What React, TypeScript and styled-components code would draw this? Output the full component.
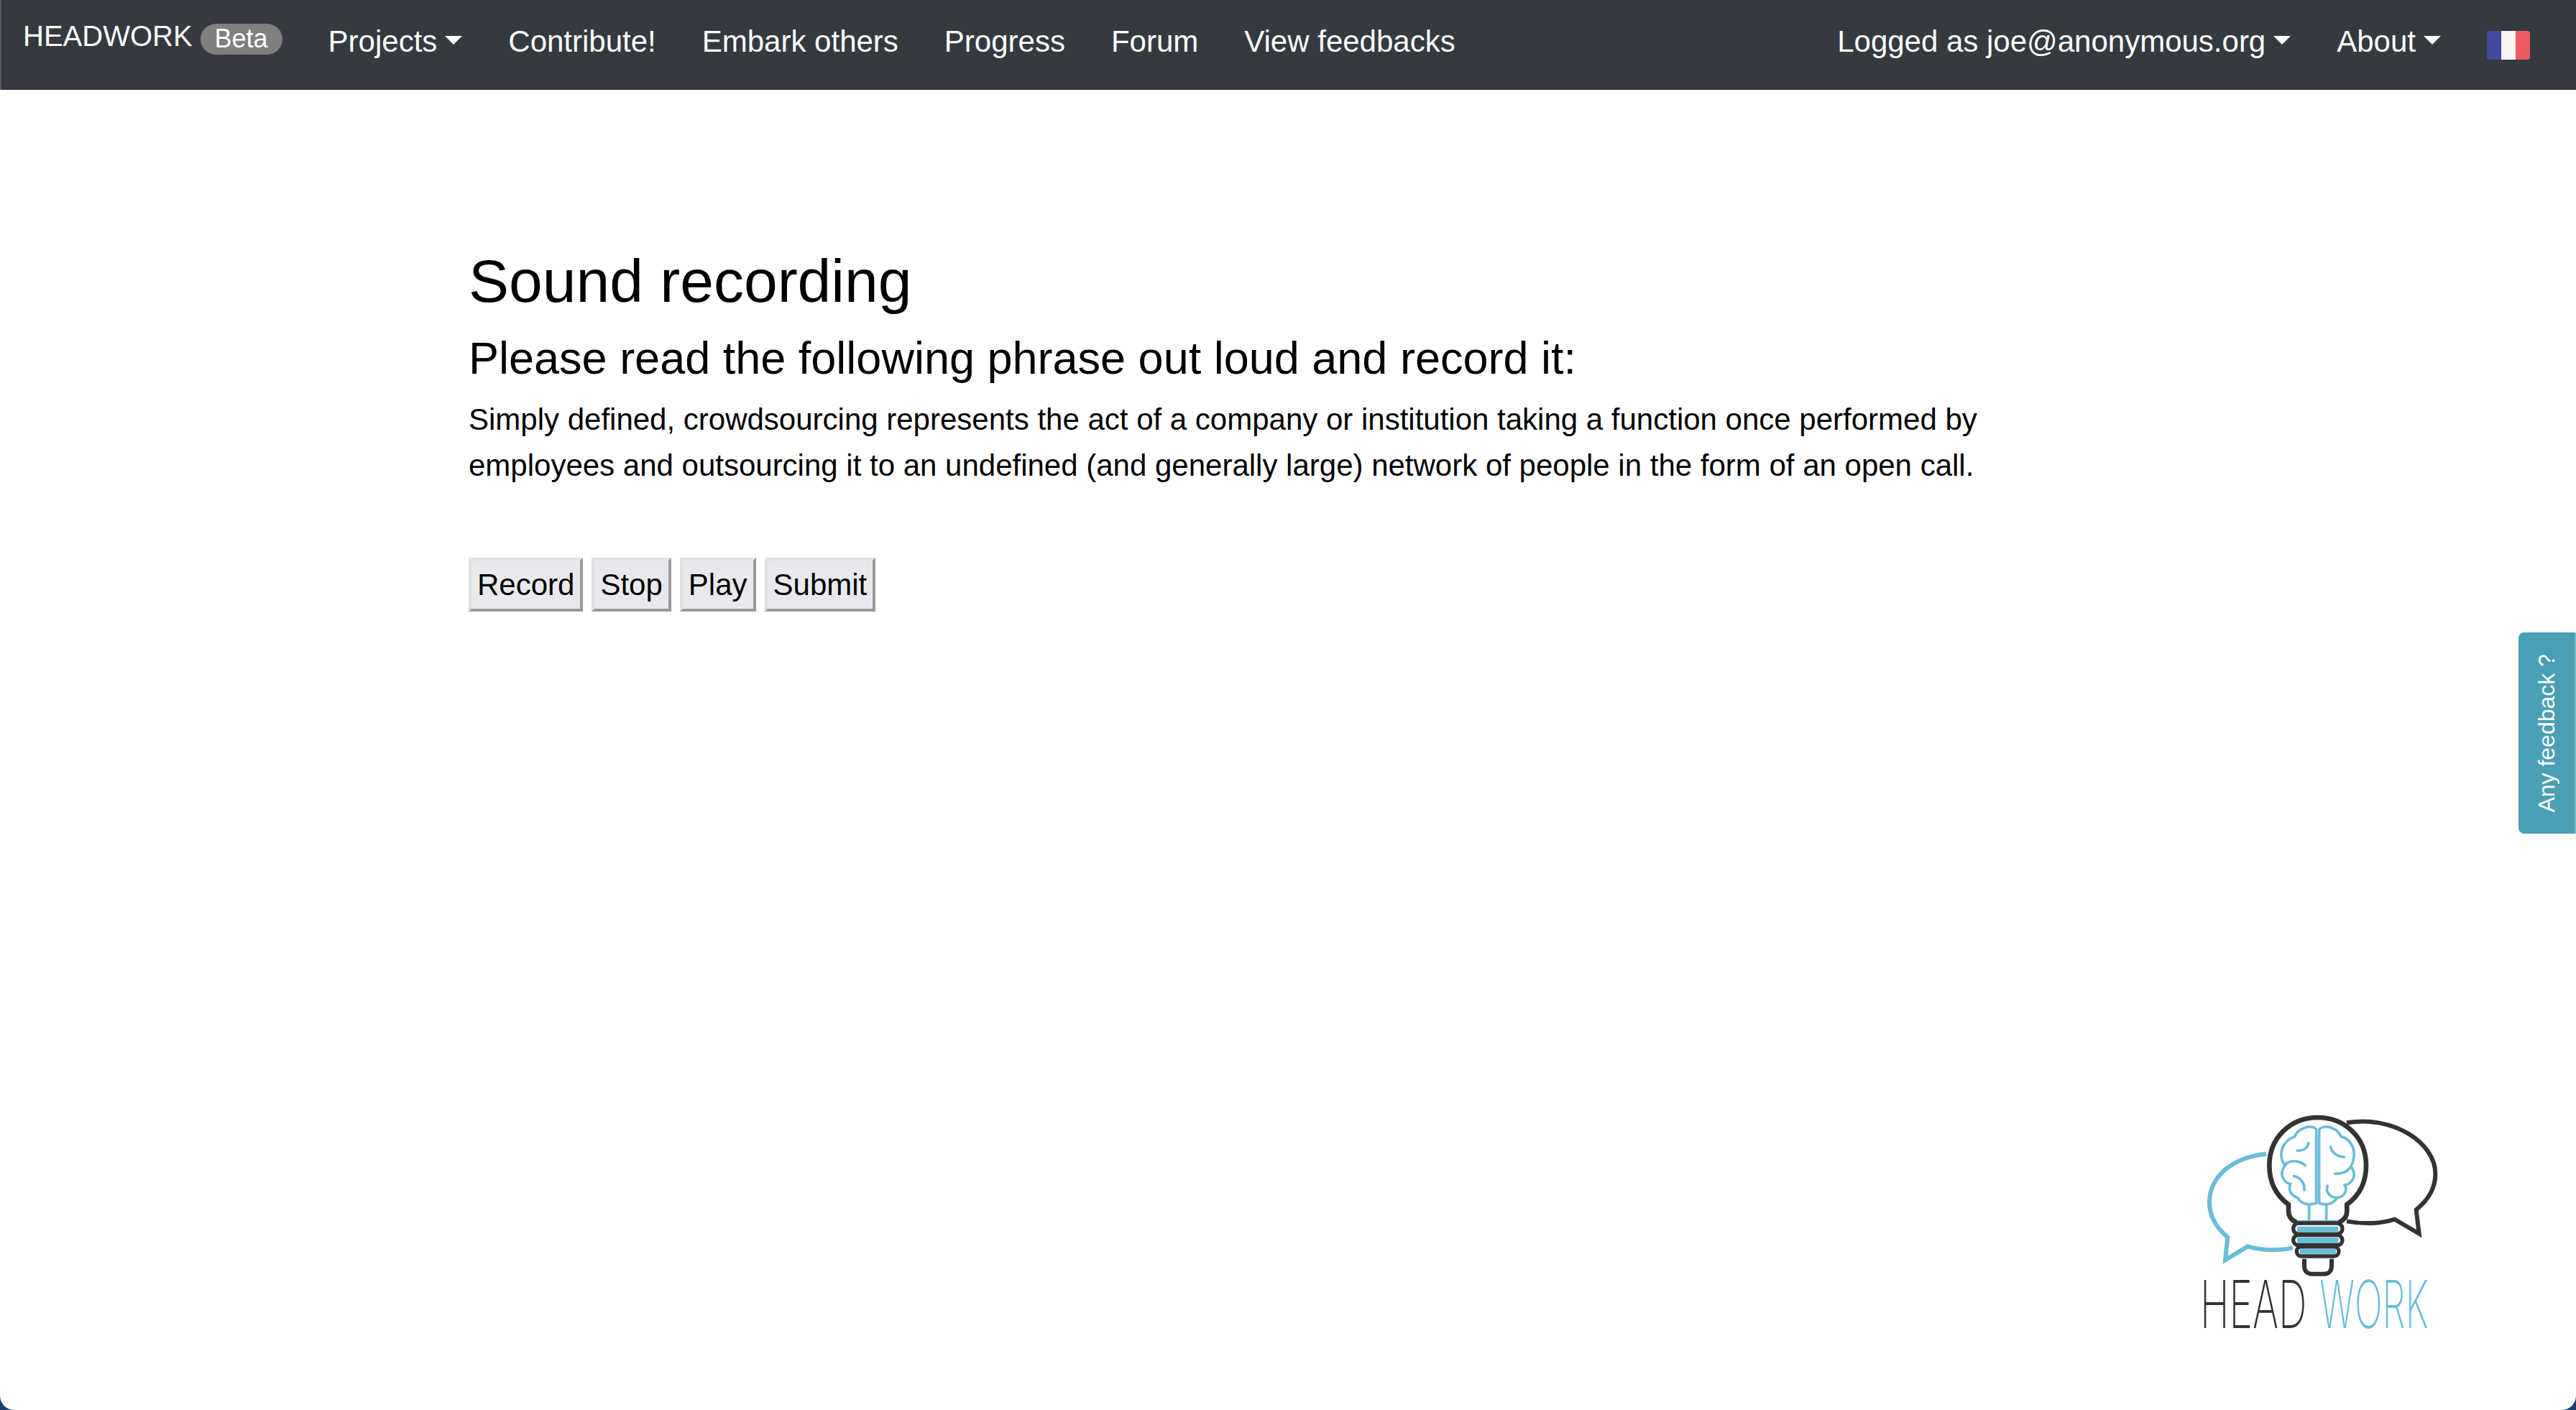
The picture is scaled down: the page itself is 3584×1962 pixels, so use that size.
import React from "react";
import styled, { createGlobalStyle } from "styled-components";

const GlobalStyle = createGlobalStyle`
  html, body {
    margin: 0;
    padding: 0;
    height: 100%;
    background: #1b3f6b;
  }
  #root {
    height: 100%;
  }
  * {
    box-sizing: border-box;
  }
`;

const leftLinks = ["Contribute!", "Embark others", "Progress", "Forum", "View feedbacks"];
const actions = ["Record", "Stop", "Play", "Submit"];

const Logo = () => (
  <LogoSvg viewBox="0 0 1200 1080" role="img" aria-label="Headwork">
    <g fill="none" strokeLinecap="round" strokeLinejoin="miter">
      <path
        d="M400 257C260 270 162 350 162 460C162 520 190 565 238 605L228 700L322 643C380 660 445 662 510 650"
        stroke="#6abdd8"
        strokeWidth="18"
        strokeLinecap="butt"
      />
      <path
        d="M735 127C930 95 1105 210 1105 340C1105 400 1075 450 1025 490L1037 590L935 530C870 550 800 550 735 538"
        stroke="#333"
        strokeWidth="18"
        strokeLinecap="butt"
      />
      <g stroke="#6abdd8" strokeWidth="11">
        <path d="M608 155C600 142 570 140 555 150C540 155 525 165 518 185C495 190 465 215 462 255C460 275 470 300 478 305C465 320 460 345 470 360C478 375 490 380 500 383C490 405 500 430 530 440C545 465 575 475 608 462Z" />
        <path d="M620 155C630 142 660 140 675 150C690 155 705 170 712 185C740 190 768 225 765 260C765 280 760 295 752 310C770 330 770 360 750 375C745 382 735 385 727 387C740 410 725 435 695 440C680 465 650 475 620 462Z" />
        <path d="M528 243C550 245 572 235 575 212" />
        <path d="M478 300C505 280 540 285 562 305" />
        <path d="M515 350C540 355 560 375 558 408" />
        <path d="M668 227C670 250 695 268 725 270" />
        <path d="M686 340C715 340 740 330 752 310" />
        <path d="M655 390C645 415 665 440 695 440" />
        <path d="M578 470V535M650 470V535" strokeLinecap="butt" />
      </g>
      <path
        d="M520 540C500 530 492 515 492 495V468C440 430 412 375 412 305C412 190 500 105 614 105C728 105 816 190 816 305C816 375 788 430 736 468V495C736 515 728 530 708 540"
        stroke="#333"
        strokeWidth="20"
      />
      <g fill="#6abdd8" stroke="none">
        <rect x="528" y="533" width="172" height="10" />
        <rect x="528" y="560" width="172" height="24" rx="4" />
        <rect x="528" y="606" width="172" height="24" rx="4" />
        <rect x="540" y="652" width="150" height="22" rx="4" />
      </g>
      <g stroke="#333" strokeWidth="16">
        <rect x="512" y="546" width="205" height="46" rx="23" />
        <rect x="512" y="596" width="205" height="42" rx="21" />
        <rect x="526" y="644" width="176" height="40" rx="20" />
      </g>
      <path d="M558 695V725C558 750 575 758 590 758H640C660 758 672 745 672 725V695" stroke="#333" strokeWidth="18" strokeLinecap="butt" />
    </g>
    <WordMark transform="translate(123 985) scale(0.6 1)" fill="#333">
      HEAD
    </WordMark>
    <WordMark transform="translate(622 985) scale(0.56 1)" fill="#6abdd8">
      WORK
    </WordMark>
  </LogoSvg>
);

const Flag = () => (
  <FlagSvg viewBox="0 0 60 40">
    <defs>
      <clipPath id="flag-clip">
        <rect width="60" height="40" rx="4" />
      </clipPath>
    </defs>
    <g clipPath="url(#flag-clip)">
      <rect width="20" height="40" fill="#434a9b" />
      <rect x="20" width="20" height="40" fill="#f4f4f4" />
      <rect x="40" width="20" height="40" fill="#ec5a60" />
    </g>
  </FlagSvg>
);

export default function App() {
  return (
    <>
      <GlobalStyle />
      <Page>
        <Navbar>
          <Brand>
            HEADWORK
            <Badge>Beta</Badge>
          </Brand>
          <NavLink $caret>Projects</NavLink>
          {leftLinks.map((link) => (
            <NavLink key={link}>{link}</NavLink>
          ))}
          <NavRight>
            <NavLink $caret>Logged as joe@anonymous.org</NavLink>
            <NavLink $caret>About</NavLink>
            <FlagSlot>
              <Flag />
            </FlagSlot>
          </NavRight>
        </Navbar>
        <Main>
          <Title>Sound recording</Title>
          <Subtitle>Please read the following phrase out loud and record it:</Subtitle>
          <Phrase>
            Simply defined, crowdsourcing represents the act of a company or institution taking a function once performed by
            employees and outsourcing it to an undefined (and generally large) network of people in the form of an open call.
          </Phrase>
          <Actions>
            {actions.map((action) => (
              <ActionButton key={action} type="button">
                {action}
              </ActionButton>
            ))}
          </Actions>
        </Main>
        <Footer>
          <Logo />
        </Footer>
        <FeedbackTab>
          <FeedbackText>Any feedback ?</FeedbackText>
        </FeedbackTab>
      </Page>
    </>
  );
}

const Page = styled.div`
  position: relative;
  height: 1962px;
  display: flex;
  flex-direction: column;
  background: #fff;
  border-radius: 0 0 20px 20px;
  overflow: hidden;
  font-family: "Liberation Sans", Arial, sans-serif;
  color: #000;
`;

const Navbar = styled.nav`
  height: 125px;
  flex: none;
  display: flex;
  align-items: center;
  padding: 0 32px 10px 30px;
  background: #343a40;
  border-left: 2px solid #5a5f64;
`;

const Brand = styled.div`
  display: flex;
  align-items: center;
  margin-right: 32px;
  margin-top: -15px;
  font-size: 40px;
  color: #fff;
  white-space: nowrap;
`;

const Badge = styled.span`
  width: 114px;
  height: 43px;
  margin-left: 11px;
  margin-top: 8px;
  display: flex;
  align-items: center;
  justify-content: center;
  border-radius: 22px;
  background: #7f7f7f;
  font-size: 36px;
`;

const NavLink = styled.a<{ $caret?: boolean }>`
  display: flex;
  align-items: center;
  padding: 0 32px;
  font-size: 42px;
  color: #fff;
  white-space: nowrap;

  ${(props) =>
    props.$caret &&
    `
    &::after {
      content: "";
      margin-left: 11px;
      margin-top: -3px;
      border-top: 12px solid #fff;
      border-left: 12px solid transparent;
      border-right: 12px solid transparent;
    }
  `}
`;

const NavRight = styled.div`
  display: flex;
  align-items: center;
  margin-left: auto;
`;

const FlagSlot = styled.div`
  display: flex;
  padding: 0 32px;
  margin-top: 10px;
`;

const FlagSvg = styled.svg`
  display: block;
  width: 60px;
  height: 40px;
`;

const Main = styled.main`
  flex: 1;
  padding: 216px 0 0 652px;
`;

const Title = styled.h1`
  margin: 0;
  font-size: 84px;
  font-weight: 400;
  line-height: 1.2;
`;

const Subtitle = styled.h2`
  margin: 19px 0 0;
  font-size: 63px;
  font-weight: 400;
  line-height: 1.2;
`;

const Phrase = styled.p`
  width: 2200px;
  margin: 16px 0 0;
  font-size: 42px;
  line-height: 64px;
`;

const Actions = styled.div`
  display: flex;
  gap: 12px;
  margin-top: 96px;
`;

const ActionButton = styled.button`
  height: 75px;
  padding: 0 8px;
  border: 4px solid;
  border-color: #e0e0e0 #999 #999 #e0e0e0;
  background: #e9e9ed;
  font-family: inherit;
  font-size: 42px;
  color: #000;
`;

const Footer = styled.footer`
  flex: none;
  display: flex;
  justify-content: flex-end;
  padding: 0 164px 82px 0;
`;

const LogoSvg = styled.svg`
  display: block;
  width: 400px;
  height: 360px;
`;

const WordMark = styled.text`
  font-family: Inter, "Liberation Sans", sans-serif;
  font-size: 275px;
  font-weight: 200;
`;

const FeedbackTab = styled.div`
  position: absolute;
  top: 880px;
  right: 0;
  width: 80px;
  height: 280px;
  display: flex;
  align-items: center;
  justify-content: center;
  background: #4a9fb5;
  border-right: 2px solid #77b9ca;
  border-radius: 8px 0 0 8px;
`;

const FeedbackText = styled.span`
  writing-mode: vertical-rl;
  transform: rotate(180deg);
  font-size: 32px;
  color: #fff;
  white-space: nowrap;
`;
